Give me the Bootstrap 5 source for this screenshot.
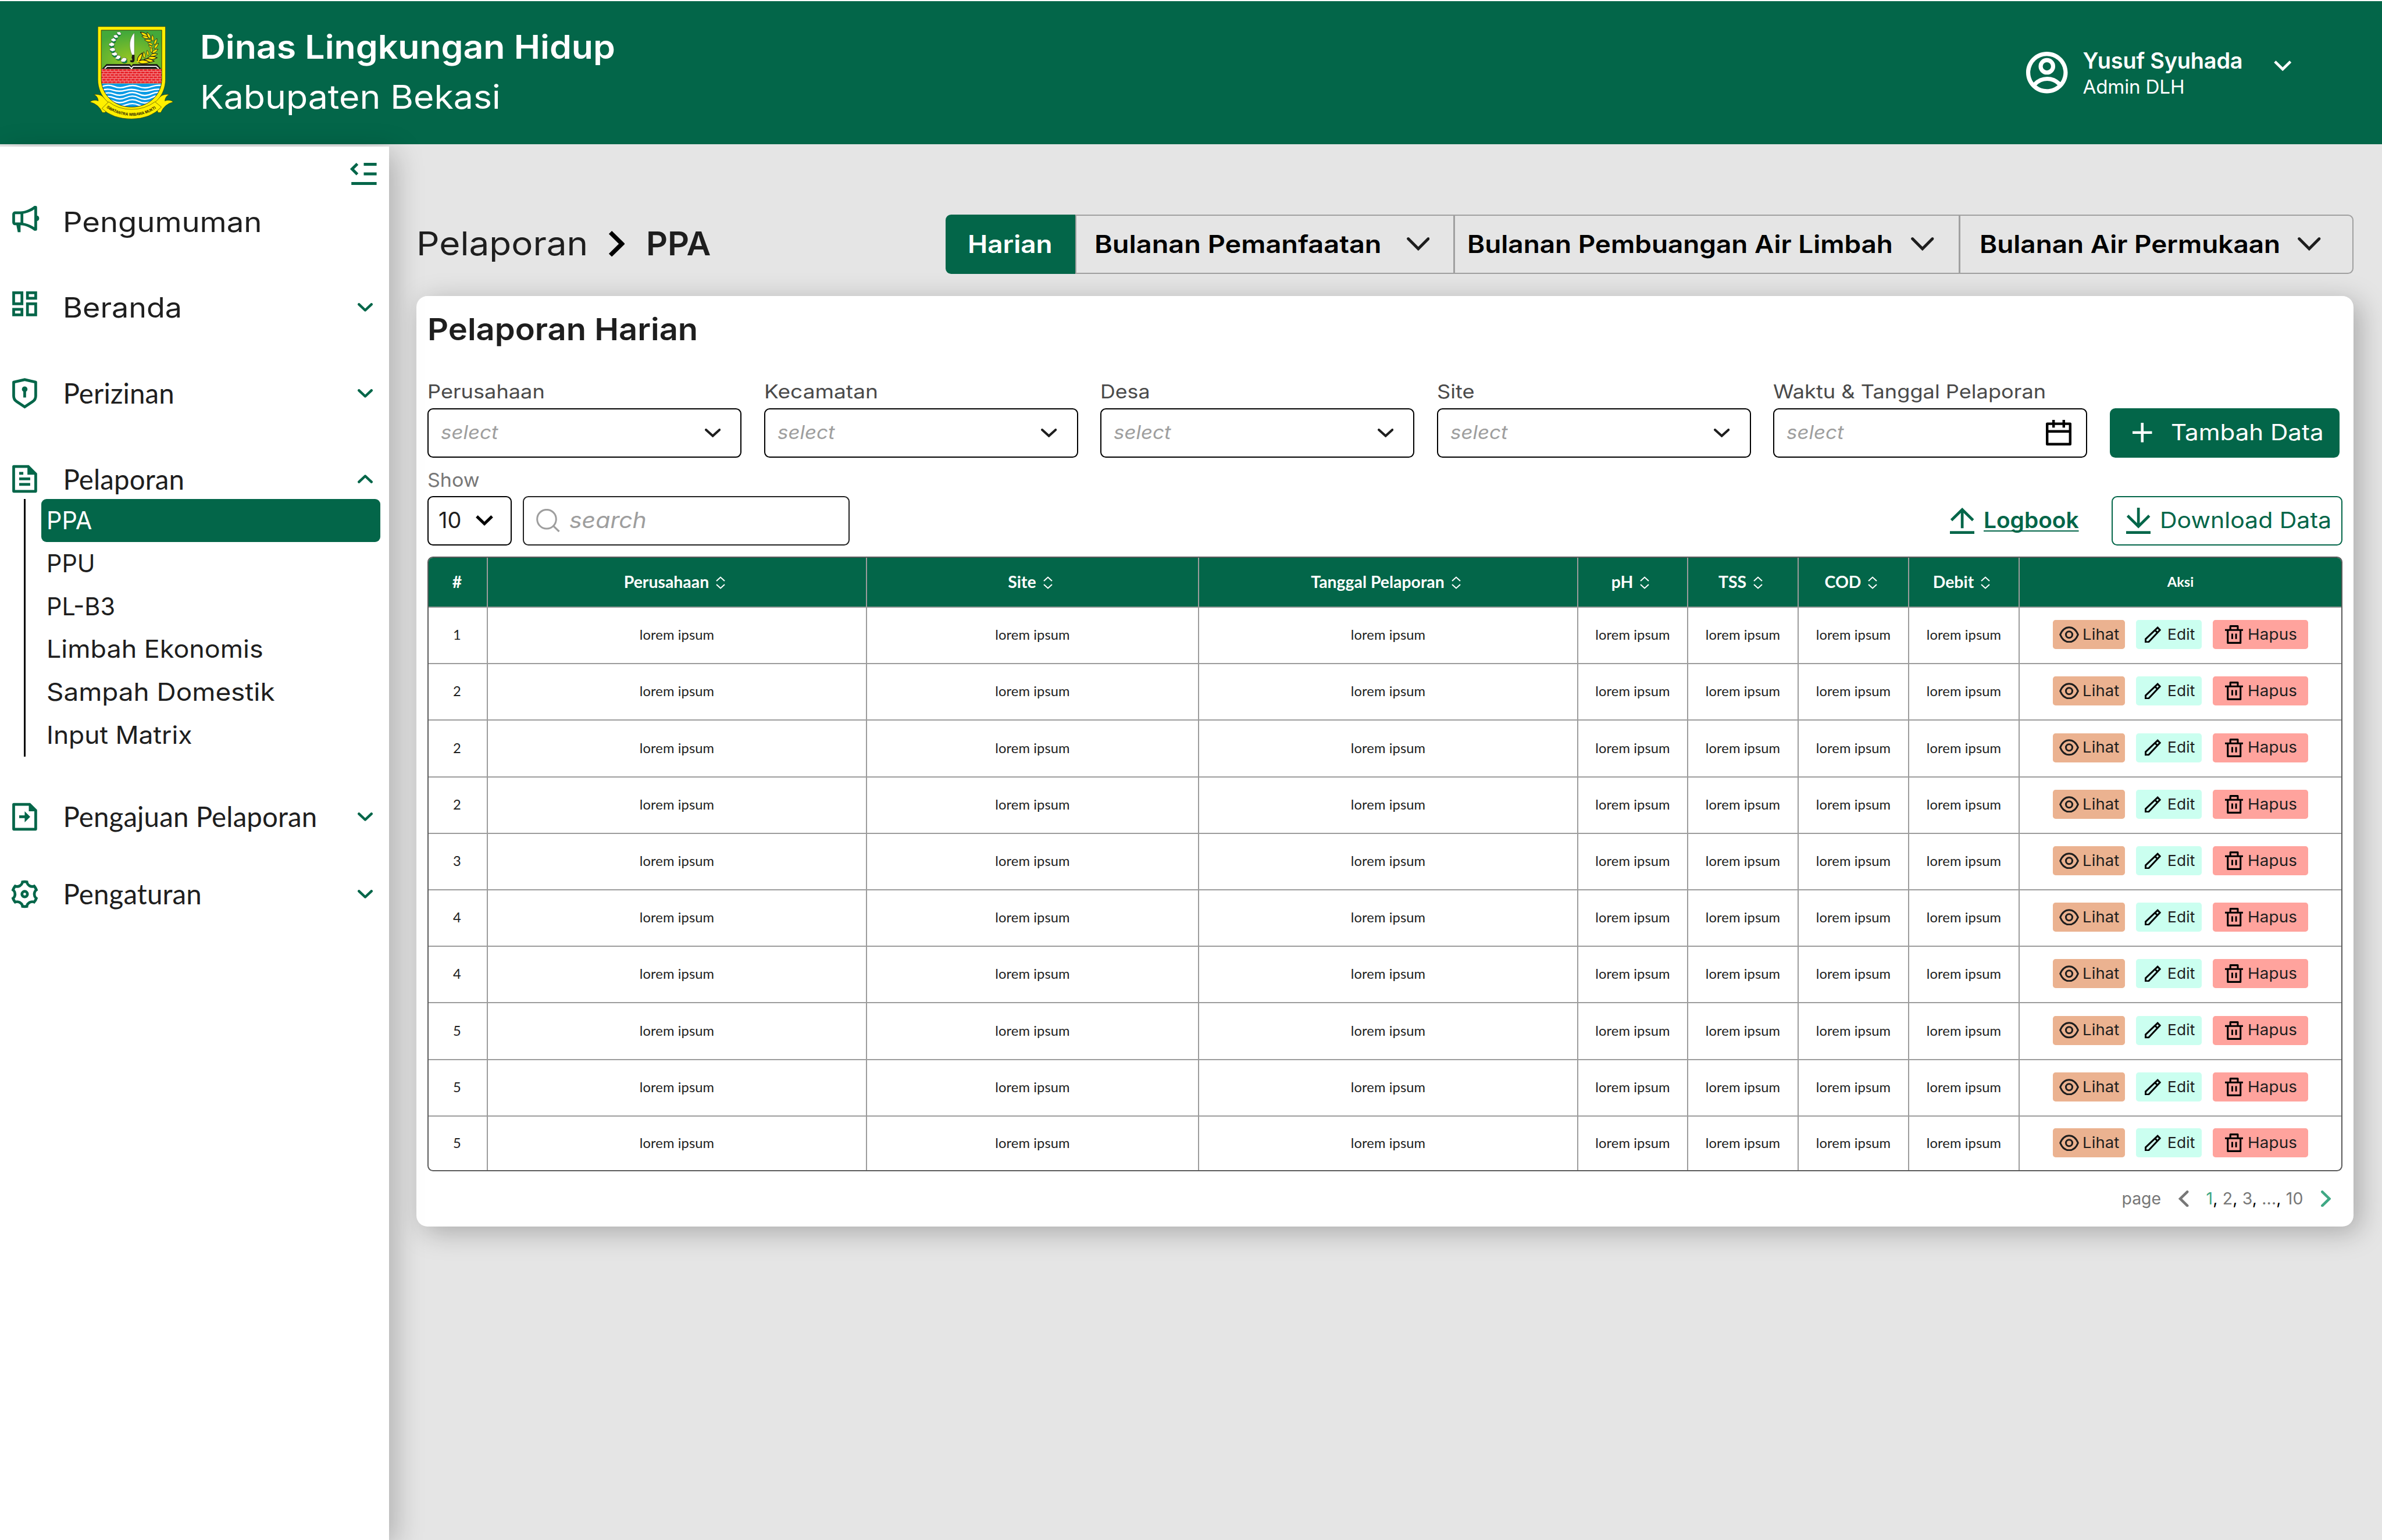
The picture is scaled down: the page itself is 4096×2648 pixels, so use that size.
<!DOCTYPE html>
<html lang="id">
<head>
<meta charset="utf-8">
<meta name="viewport" content="width=device-width, initial-scale=1">
<title>Pelaporan Harian - Dinas Lingkungan Hidup</title>
<link href="https://cdn.jsdelivr.net/npm/bootstrap@5.3.0/dist/css/bootstrap.min.css" rel="stylesheet">
<style>
:root{--dlh:#036649;--ink:#1e1e1e;--line:#9c9c9c}
body{font-family:Inter,"Open Sans",sans-serif;background:#e5e5e5;color:var(--ink);line-height:1;height:2648px;overflow:hidden}
svg{display:block;flex:none}
.lato{font-family:Lato,sans-serif}
.text-dlh{color:var(--dlh)!important}
.bg-dlh{background:var(--dlh)!important}
/* widened lettering: the number is the extra width in thousandths */
.wide{display:inline-block;transform-origin:0 50%;transform:scaleX(var(--w));white-space:nowrap}
.w-20{--w:.97}.w25{--w:1.025}.w40{--w:1.04}.w50{--w:1.052}.w65{--w:1.067}.w75{--w:1.075}.w80{--w:1.082}.w90{--w:1.09}.w98{--w:1.098}.w110{--w:1.11}.w118{--w:1.118}
.w10{--w:1.011}
.t-02{letter-spacing:-.2px}.t0{letter-spacing:.15px}

/* top bar */
.topbar{height:248px;border-top:2px solid #fff;padding:0 156px 0 154px}
.brand-text{font-size:56.9px;line-height:85.2px;margin:0 0 3px 45.5px;white-space:nowrap}
.user-box{width:328px;padding-left:26px;line-height:44.4px;margin-top:3px;box-sizing:content-box;white-space:nowrap}
.user-box b{font-size:37.9px;font-weight:600;display:block}
.user-box span{font-size:33.2px;display:block}

/* side menu */
.side{width:668.5px;height:2396px;margin-top:4px;padding-top:28px;background:#fff;box-shadow:9.5px 9.5px 47px rgba(0,0,0,.25);position:relative;z-index:2}
.side-top{padding-right:21px;margin-bottom:28.5px}
.side-link{height:70px;margin-bottom:77.3px;padding:0 27.5px 0 14.2px;font-size:47.4px;color:var(--ink)}
.side-link .ico{width:94.3px;color:var(--dlh)}
.side-link .raise{margin-bottom:13px}
.side-link .chev{margin-left:auto;color:var(--dlh)}
.side-link.open{margin-bottom:0}
.side-link.after-sub{margin-bottom:63px}
.sub{margin:0 14.5px 68.5px 41.3px;border-left:3px solid #000;padding-left:27px}
.sub a{display:block;height:73.7px;line-height:73.7px;font-size:42.67px;color:var(--ink);text-decoration:none;padding-left:8.5px;border-radius:9px;white-space:nowrap}
.sub a.active{background:var(--dlh);color:#fff}

/* content */
.content{padding:121px 49.5px 0 47px;min-width:0}
.headline{height:102px;margin-bottom:38px}
.crumb{font-size:56.9px;padding-bottom:2px}
.crumb .first{width:330px}
.crumb .last{font-weight:600;margin-left:37px}
.period{height:102px}
.period .btn{border:2.4px solid #a0a0a0;border-radius:9.5px;font-size:42.67px;font-weight:600;color:#000;line-height:1;padding:0;white-space:nowrap;display:flex;align-items:center;justify-content:space-between;flex:none}
.period .b1{width:224px;background:var(--dlh);border-color:var(--dlh);color:#fff;padding-left:36px}
.period .b2{width:652.5px;padding:0 41px 0 31.5px}
.period .b3{width:869.3px;padding:0 42px 0 21px}
.period .b4{width:678px;padding:0 54px 0 33px}

.panel{height:1600px;background:#fff;border:0;border-radius:19px;padding:0 19px 0 19.5px;box-shadow:11px 9.5px 47px rgba(0,0,0,.26)}
.panel h1{font-size:52.15px;font-weight:600;line-height:114px;margin:0 0 29.5px -.5px;color:var(--ink)}
.filters{gap:38.5px}
.filters .item{width:540px}
.filters label,.lbl{font-size:33.2px;line-height:40px;color:#4a4a4a;display:block;margin-bottom:9px;white-space:nowrap}
.lbl{color:#777;margin:18px 0 8px}
.box{height:85px;border:2.4px solid #000;border-radius:9.5px;background:#fff;display:flex;align-items:center;justify-content:space-between;padding:0 34px 0 21px}
.box i{font-size:33.2px;color:#9e9e9e}
.box.date{padding-right:25.5px}
.add{height:85px;width:395px;border-radius:9.5px;font-size:37.9px;color:#fff;padding:0 0 0 39.5px;line-height:1;margin-top:auto;white-space:nowrap}
.add svg{margin-right:32px}
.count{width:145px;font-size:37.9px;padding:0 30.5px 0 17px}
.find{width:561.5px;margin-left:19px;border-color:#222;justify-content:flex-start;padding-left:20.5px}
.find i{font-size:37.9px;margin-left:16px}
.logbook{font-size:37.9px;font-weight:600;margin-right:60px;color:var(--dlh);text-decoration:none}
.logbook span{margin-left:16px;text-decoration:underline;text-decoration-thickness:2.4px;text-underline-offset:4px;text-decoration-skip-ink:none}
.dl{width:396.5px;height:85.5px;border:2.4px solid var(--dlh);border-radius:9.5px;font-size:37.9px;color:var(--dlh);padding:0 0 0 22.5px;line-height:1;white-space:nowrap}
.dl svg{margin-right:16px}

.grid-wrap{border:2.4px solid #5a5a5a;border-radius:9.5px;overflow:hidden;margin-top:18.5px;height:1057px}
.grid{table-layout:fixed;width:3289px;border-collapse:separate;border-spacing:0;margin:0;font-family:Lato,sans-serif;text-align:center;--bs-table-bg:transparent;color:var(--ink)}
.grid th,.grid td{padding:0!important;vertical-align:middle;border:0 solid var(--line)!important;border-width:0 2px 2px 0!important;line-height:1;box-shadow:none!important}
.grid th:last-child,.grid td:last-child{border-right-width:0!important}
.grid tbody tr:last-child td{border-bottom-width:0!important}
.grid th{height:86px;background:var(--dlh)!important;color:#fff;font-size:28.4px;font-weight:700}
.grid th svg{display:inline-block;vertical-align:-2px;margin:0 8px 0 12px}
.grid th.act{font-size:23.7px}
.grid td{height:97px;font-size:23.7px;letter-spacing:.12px;color:var(--ink)}
.grid td:first-child,.grid th:first-child{padding-right:2px!important}
.grid tbody tr:nth-child(5n+3) td{height:98px}
.grid tbody tr:last-child td{height:93px}
.acts{margin-bottom:2px}
.tagbtn{height:50px;border-radius:4.7px;font-family:Inter,sans-serif;font-size:26.07px;display:flex;align-items:center;color:#1e1e1e;white-space:nowrap}
.see{width:123.3px;background:#ebb290;padding-left:11px;margin-right:19px}
.see svg{margin-right:5.5px}
.edit{width:113.7px;background:#cbfff0;padding-left:15px;margin-right:18.6px}
.edit svg{margin-right:11px;color:#000}
.del{width:164px;background:#ffa39d;padding-left:21px}
.del svg{margin-right:7.5px;color:#000}
.pager{font-size:28.4px;color:#777;padding:33px 19.5px 0 0;gap:30px}
.pager em{font-style:normal;color:#000}
.text-now{color:#3fa884}
</style>
<script src="https://cdn.jsdelivr.net/npm/bootstrap@5.3.0/dist/js/bootstrap.bundle.min.js"></script>
</head>
<body>
<svg width="0" height="0" style="position:absolute">
  <defs>
    <symbol id="chev" viewBox="0 0 26 15"><path d="M2.3 2.3 13 12.5 23.7 2.3" fill="none" stroke="currentColor" stroke-width="4.4" stroke-linecap="round" stroke-linejoin="round"/></symbol>
    <symbol id="chev-lg" viewBox="0 0 39.6 23.4"><path d="M2.6 2.6 19.8 19.8 37 2.6" fill="none" stroke="currentColor" stroke-width="4.9" stroke-linecap="round"/></symbol>
    <symbol id="chev-md" viewBox="0 0 27.3 15"><path d="M2 2 13.65 12.6 25.3 2" fill="none" stroke="currentColor" stroke-width="4" stroke-linecap="round"/></symbol>
    <symbol id="sort" viewBox="0 0 16 22"><path d="M1 8 8 1.6 15 8M1 14 8 20.4 15 14" fill="none" stroke="currentColor" stroke-width="2.1"/></symbol>
    <symbol id="eye" viewBox="0 0 34 28.6"><path d="M1.7 14.3C5 6 10.500 1.7 17 1.700S29 6 32.300 14.300C29 22.600 23.500 26.900 17 26.900S5 22.600 1.700 14.300z" fill="none" stroke="currentColor" stroke-width="3.100"/><circle cx="17" cy="14.300" r="5.500" fill="none" stroke="currentColor" stroke-width="3.100"/></symbol>
    <symbol id="pen" viewBox="0 0 28.500 28.600"><path d="M1.500 21.900 22.200 2.100 26.200 6.200 6.600 27H1.500zM17.600 6.500 22 11" fill="none" stroke="currentColor" stroke-width="3"/></symbol>
    <symbol id="bin" viewBox="0 0 31.500 32"><path d="M0 8.200H31.500M9.200 8V1.600H22V8M4.800 8.200V30.400H26.700V8.200" fill="none" stroke="currentColor" stroke-width="3.100" stroke-linejoin="round"/><path d="M12.500 14.600V23.700M19.100 14.600V23.700" stroke="currentColor" stroke-width="3"/></symbol>
    <path id="leaf" d="M0 0C-15-12-15-38 0-62C13-38 13-12 0 0z"/>
    <g id="boll"><path d="M-24 4Q-14 32 14 26L24 2z" fill="#009245" stroke="#1a1a1a" stroke-width="2"/><path d="M-26-4Q-20-14-10-14Q-2-24 8-16Q24-12 22 4Q16 12 6 12Q-4 20-12 10Q-26 8-26-4z" fill="#fff" stroke="#333" stroke-width="2"/></g>
    <radialGradient id="field" cx="50%" cy="80%" r="75%"><stop offset="0" stop-color="#9cc821"/><stop offset="1" stop-color="#43a93a"/></radialGradient>
    <pattern id="brick" x="162" y="450" width="36" height="42" patternUnits="userSpaceOnUse"><rect width="36" height="42" fill="#f9c9c6"/><rect x="1" y="1.500" width="6" height="17" fill="#e71d25"/><rect x="10" y="1.500" width="26" height="17" fill="#e71d25"/><rect x="0" y="22.500" width="20" height="17" fill="#e71d25"/><rect x="23" y="22.500" width="13" height="17" fill="#e71d25"/></pattern>
    <clipPath id="shieldClip"><path d="M162 112H689V540C689 660 590 782 426 782S162 660 162 540z"/></clipPath>
    <path id="motto" d="M206 786Q300 856 426 858T660 780"/>
  </defs>
</svg>

<header class="topbar bg-dlh text-white d-flex align-items-center">
  <svg width="144.500" height="160" viewBox="60 78 732 809" role="img" aria-label="Lambang Kabupaten Bekasi">
    <g stroke="#2b2b00" stroke-width="3" stroke-linejoin="round">
      <path d="M62 737Q95 712 136 728Q134 690 98 672Q150 668 174 690L226 736L196 830L172 830Q140 756 62 737z" fill="#fff000"/>
      <path d="M790 737Q757 712 716 728Q718 690 754 672Q702 668 678 690L626 736L656 830L680 830Q712 756 790 737z" fill="#fff000"/>
      <path d="M132 81H721V540C721 690 610 806 426 806S132 690 132 540z" fill="#fff000"/>
    </g>
    <g clip-path="url(#shieldClip)">
      <rect x="162" y="112" width="527" height="340" fill="url(#field)"/>
      <rect x="162" y="449" width="527" height="128" fill="url(#brick)"/>
      <rect x="162" y="577" width="527" height="210" fill="#0a9be4"/>
      <g fill="none" stroke="#fff" stroke-width="12">
        <path d="M160 606Q220 580 272 602T380 604T488 604T600 604T700 596"/>
        <path d="M160 640Q210 616 262 634T370 636T480 636T590 636T700 630"/>
        <path d="M160 672Q220 646 272 668T380 666T488 668T596 668T700 660"/>
        <path d="M160 706Q220 676 272 700T380 698T488 700T596 700T700 692"/>
        <path d="M160 738Q220 708 272 732T380 730T488 732T596 732T700 724"/>
        <path d="M160 766Q220 744 272 764T380 762T488 764T596 764T700 760"/>
      </g>
    </g>
    <path d="M162 112H689V540C689 660 590 782 426 782S162 660 162 540z" fill="none" stroke="#111" stroke-width="4"/>
    <path d="M168 449 207 408H412L426 426 436 408H648L684 449z" fill="#1a1718"/>
    <path d="M192 447 212 427H406L426 445 440 427H640L662 447" fill="none" stroke="#fff" stroke-width="9"/>
    <path d="M450 136C405 180 400 260 430 328H450z" fill="#fff" stroke="#444" stroke-width="2"/>
    <path d="M432 327H452V372Q450 394 430 393Q412 392 413 376Q424 372 430 376Q436 366 426 352z" fill="#1a1718"/>
    <use href="#boll" transform="translate(360 372) rotate(-25) scale(1.100)"/>
    <use href="#boll" transform="translate(309 350) rotate(-18)"/>
    <use href="#boll" transform="translate(279 321)"/>
    <use href="#boll" transform="translate(261 282)"/>
    <use href="#boll" transform="translate(254 238)"/>
    <use href="#boll" transform="translate(270 198) scale(.9)"/>
    <use href="#boll" transform="translate(290 168) rotate(10) scale(.850)"/>
    <use href="#boll" transform="translate(317 142) rotate(20) scale(.800)"/>
    <g fill="#ffe600" stroke="#1a1718" stroke-width="4">
      <use href="#leaf" transform="translate(565 165) rotate(-60) scale(1.150)"/>
      <use href="#leaf" transform="translate(590 185) rotate(-28)"/>
      <use href="#leaf" transform="translate(575 180) rotate(-76)"/>
      <use href="#leaf" transform="translate(612 208) rotate(-4) scale(.9)"/>
      <use href="#leaf" transform="translate(600 207) rotate(-80)"/>
      <use href="#leaf" transform="translate(624 238) rotate(23) scale(.95)"/>
      <use href="#leaf" transform="translate(612 240) rotate(-68) scale(.800)"/>
      <use href="#leaf" transform="translate(624 272) rotate(38) scale(.950)"/>
      <use href="#leaf" transform="translate(610 272) rotate(-50) scale(.750)"/>
      <use href="#leaf" transform="translate(605 312) rotate(56)"/>
      <use href="#leaf" transform="translate(600 308) rotate(-6) scale(.800)"/>
      <use href="#leaf" transform="translate(590 335) rotate(76) scale(1.050)"/>
      <use href="#leaf" transform="translate(572 335) rotate(-12) scale(.800)"/>
      <use href="#leaf" transform="translate(565 358) rotate(86) scale(1.350)"/>
      <use href="#leaf" transform="translate(540 355) rotate(-8) scale(.900)"/>
      <use href="#leaf" transform="translate(530 374) rotate(95) scale(1.500)"/>
      <use href="#leaf" transform="translate(480 388) rotate(27) scale(1.400)"/>
      <use href="#leaf" transform="translate(484 388) rotate(92) scale(1.600)"/>
    </g>
    <path d="M468 382 484 396 494 378z" fill="#ffe600"/>
    <path d="M226 736Q310 802 426 802T630 736L686 782Q590 885 426 885T168 794z" fill="#fff000" stroke="#2b2b00" stroke-width="3"/>
    <text font-family="Liberation Sans" font-weight="700" font-size="36" fill="#2b2300"><textPath href="#motto" textLength="462" lengthAdjust="spacingAndGlyphs">SWATANTRA WIBAWA MUKTI</textPath></text>
  </svg>
  <div class="brand-text"><div><span class="wide w65 fw-semibold">Dinas Lingkungan Hidup</span></div><div><span class="wide w65">Kabupaten Bekasi</span></div></div>
  <div class="ms-auto d-flex align-items-center">
    <svg width="71.500" height="71.500" viewBox="2 2 20 20" fill="currentColor"><path d="M12 22C6.477 22 2 17.523 2 12S6.477 2 12 2s10 4.477 10 10-4.477 10-10 10zm-4.987-3.744A7.966 7.966 0 0 0 12 20c1.970 0 3.773-.712 5.167-1.892A6.979 6.979 0 0 0 12.160 16a6.981 6.981 0 0 0-5.147 2.256zM5.616 16.820A8.975 8.975 0 0 1 12.160 14a8.972 8.972 0 0 1 6.362 2.634 8 8 0 1 0-12.906.187zM12 13a4 4 0 1 1 0-8 4 4 0 0 1 0 8zm0-2a2 2 0 1 0 0-4 2 2 0 0 0 0 4z"/></svg>
    <div class="user-box"><b class="t-02">Yusuf Syuhada</b><span class="t-02">Admin DLH</span></div>
    <svg width="30.500" height="18.500" viewBox="0 0 30.500 18.500" class="mb-4"><path d="M1.900 1.900 15.250 15 28.600 1.900" fill="none" stroke="currentColor" stroke-width="4.600"/></svg>
  </div>
</header>

<div class="d-flex">
  <nav class="side flex-shrink-0">
    <div class="side-top d-flex justify-content-end text-dlh">
      <svg width="45.600" height="38" viewBox="0 0 45.600 38"><path d="M12.500 1.700 3.400 10.700 12.500 19.700M23.500 2.500H45.600M23.500 19H45.600M2.200 35.500H45.600" fill="none" stroke="currentColor" stroke-width="4.900"/></svg>
    </div>
    <a class="side-link d-flex align-items-center text-decoration-none" href="#">
      <span class="ico raise"><svg width="56.900" height="56.900" viewBox="0 0 24 24" fill="currentColor" fill-rule="evenodd"><path d="M21 10.060V4a1 1 0 0 0-1-1h-1c-2.500 2-6.500 4-10 4H5a2 2 0 0 0-2 2v6a2 2 0 0 0 2 2h1l1 5h2v-5c3.500 0 7.500 2 10 4h1a1 1 0 0 0 1-1v-6.060a2 2 0 0 0 0-3.880zM5 9h4v6H5zM11 8.700c3-.5 6-1.800 8-3.200v13c-2-1.400-5-2.700-8-3.200z"/></svg></span>
      <span class="wide w110">Pengumuman</span>
    </a>
    <a class="side-link d-flex align-items-center text-decoration-none" href="#">
      <span class="ico raise"><svg width="56.900" height="56.900" viewBox="0 0 24 24" fill="currentColor"><path d="M13 21V11h8v10h-8zM3 13V3h8v10H3zm6-2V5H5v6h4zM3 21v-6h8v6H3zm2-2h4v-2H5v2zm10 0h4v-6h-4v6zM13 3h8v6h-8V3zm2 2v2h4V5h-4z"/></svg></span>
      <span class="wide w98">Beranda</span><svg class="chev" width="26" height="15"><use href="#chev"/></svg>
    </a>
    <a class="side-link lato d-flex align-items-center text-decoration-none" href="#">
      <span class="ico"><svg width="56.900" height="56.900" viewBox="0 0 24 24" fill="currentColor"><path d="M12 1l8.217 1.826a1 1 0 0 1 .783.976v9.987a6 6 0 0 1-2.672 4.992L12 23l-6.328-4.219A6 6 0 0 1 3 13.790V3.802a1 1 0 0 1 .783-.976L12 1zm0 2.049L5 4.604v9.185a4 4 0 0 0 1.781 3.328L12 20.597l5.219-3.480A4 4 0 0 0 19 13.790V4.604L12 3.050zM12 7a2 2 0 0 1 1.001 3.732L13 15h-2v-4.268A2 2 0 0 1 12 7z"/></svg></span>
      <span class="t0">Perizinan</span><svg class="chev" width="26" height="15"><use href="#chev"/></svg>
    </a>
    <a class="side-link open lato d-flex align-items-center text-decoration-none" href="#">
      <span class="ico"><svg width="56.900" height="56.900" viewBox="0 0 24 24" fill="currentColor"><path d="M21 8v12.993A1 1 0 0 1 20.007 22H3.993A.993.993 0 0 1 3 21.008V2.992C3 2.455 3.449 2 4.002 2h10.995L21 8zm-2 1h-5V4H5v16h14V9zM8 7h3v2H8V7zm0 4h8v2H8v-2zm0 4h8v2H8v-2z"/></svg></span>
      <span class="t0">Pelaporan</span><svg class="chev" width="26" height="15"><use href="#chev" transform="rotate(180 13 7.500)"/></svg>
    </a>
    <div class="sub">
      <a href="#" class="active"><span class="wide w-20">PPA</span></a>
      <a href="#"><span class="wide w-20">PPU</span></a>
      <a href="#"><span class="wide w-20">PL-B3</span></a>
      <a href="#"><span class="wide w50">Limbah Ekonomis</span></a>
      <a href="#"><span class="wide w75">Sampah Domestik</span></a>
      <a href="#"><span class="wide w40">Input Matrix</span></a>
    </div>
    <a class="side-link after-sub lato d-flex align-items-center text-decoration-none" href="#">
      <span class="ico"><svg width="56.900" height="56.900" viewBox="0 0 24 24" fill="currentColor"><path d="M15 4H5v16h14V8h-4V4zM3 2.992C3 2.444 3.447 2 3.999 2H16l5 5v13.993A1 1 0 0 1 20.007 22H3.993A1 1 0 0 1 3 21.008V2.992zM12 11V8l4 4-4 4v-3H8v-2h4z"/></svg></span>
      <span class="t0">Pengajuan Pelaporan</span><svg class="chev" width="26" height="15"><use href="#chev"/></svg>
    </a>
    <a class="side-link lato d-flex align-items-center text-decoration-none" href="#">
      <span class="ico"><svg width="56.900" height="56.900" viewBox="0 0 24 24" fill="currentColor"><path d="M3.340 17a10.018 10.018 0 0 1-.978-2.326 3 3 0 0 0 .002-5.347A9.990 9.990 0 0 1 4.865 4.990a3 3 0 0 0 4.631-2.674 9.990 9.990 0 0 1 5.007.002 3 3 0 0 0 4.632 2.672c.579.590 1.093 1.261 1.525 2.010.433.749.757 1.530.978 2.326a3 3 0 0 0-.002 5.347 9.990 9.990 0 0 1-2.501 4.337 3 3 0 0 0-4.631 2.674 9.990 9.990 0 0 1-5.007-.002 3 3 0 0 0-4.632-2.672A10.018 10.018 0 0 1 3.340 17zm5.660.196a4.993 4.993 0 0 1 2.250 2.770c.499.047 1 .048 1.499.001A4.993 4.993 0 0 1 15 17.197a4.993 4.993 0 0 1 3.525-.565c.290-.408.540-.843.748-1.298A4.993 4.993 0 0 1 18 12c0-1.260.470-2.437 1.273-3.334a8.126 8.126 0 0 0-.750-1.298A4.993 4.993 0 0 1 15 6.804a4.993 4.993 0 0 1-2.250-2.770c-.499-.047-1-.048-1.499-.001A4.993 4.993 0 0 1 9 6.803a4.993 4.993 0 0 1-3.525.565 7.990 7.990 0 0 0-.748 1.298A4.993 4.993 0 0 1 6 12c0 1.260-.470 2.437-1.273 3.334a8.126 8.126 0 0 0 .750 1.298A4.993 4.993 0 0 1 9 17.196zM12 15a3 3 0 1 1 0-6 3 3 0 0 1 0 6zm0-2a1 1 0 1 0 0-2 1 1 0 0 0 0 2z"/></svg></span>
      <span class="t0">Pengaturan</span><svg class="chev" width="26" height="15"><use href="#chev"/></svg>
    </a>
  </nav>

  <main class="content flex-grow-1">
    <div class="headline d-flex align-items-center justify-content-between">
      <div class="crumb d-flex align-items-center">
        <div class="first"><span class="wide w90">Pelaporan</span></div>
        <svg width="28.500" height="44.500" viewBox="0 0 28.500 44.500"><path d="M3.500 2.700 23.500 22.250 3.500 41.800" fill="none" stroke="#000" stroke-width="7.400"/></svg>
        <span class="last wide w10">PPA</span>
      </div>
      <div class="period btn-group">
        <button class="btn b1" type="button"><span class="wide w75">Harian</span></button>
        <button class="btn b2" type="button"><span class="wide w98">Bulanan Pemanfaatan</span><svg width="39.600" height="23.400" color="#1e1e1e"><use href="#chev-lg"/></svg></button>
        <button class="btn b3" type="button"><span class="wide w75">Bulanan Pembuangan Air Limbah</span><svg width="39.600" height="23.400" color="#1e1e1e"><use href="#chev-lg"/></svg></button>
        <button class="btn b4" type="button"><span class="wide w75">Bulanan Air Permukaan</span><svg width="39.600" height="23.400" color="#1e1e1e"><use href="#chev-lg"/></svg></button>
      </div>
    </div>

    <section class="panel card">
      <h1><span class="wide w75">Pelaporan Harian</span></h1>
      <div class="filters d-flex">
        <div class="item"><label><span class="wide w90">Perusahaan</span></label><div class="box"><i class="wide w50">select</i><svg width="27.300" height="15"><use href="#chev-md"/></svg></div></div>
        <div class="item"><label><span class="wide w118">Kecamatan</span></label><div class="box"><i class="wide w50">select</i><svg width="27.300" height="15"><use href="#chev-md"/></svg></div></div>
        <div class="item"><label><span class="wide w75">Desa</span></label><div class="box"><i class="wide w50">select</i><svg width="27.300" height="15"><use href="#chev-md"/></svg></div></div>
        <div class="item"><label><span class="wide w90">Site</span></label><div class="box"><i class="wide w50">select</i><svg width="27.300" height="15"><use href="#chev-md"/></svg></div></div>
        <div class="item"><label><span class="wide w90">Waktu &amp; Tanggal Pelaporan</span></label><div class="box date"><i class="wide w50">select</i><svg width="44" height="44" viewBox="2 1 20 20" fill="#000"><path d="M17 3h4a1 1 0 0 1 1 1v16a1 1 0 0 1-1 1H3a1 1 0 0 1-1-1V4a1 1 0 0 1 1-1h4V1h2v2h6V1h2v2zm-2 2H9v2H7V5H4v4h16V5h-3v2h-2V5zm5 6H4v8h16v-8z"/></svg></div></div>
        <button class="add btn bg-dlh border-0 d-flex align-items-center" type="button"><svg width="33.500" height="33.500" viewBox="0 0 33.500 33.500"><path d="M16.750 0V33.500M0 16.750H33.500" stroke="#fff" stroke-width="4.600"/></svg><span class="wide w110">Tambah Data</span></button>
      </div>
      <div class="lbl"><span class="wide w25">Show</span></div>
      <div class="d-flex align-items-center">
        <div class="box count">10<svg width="30" height="18" viewBox="0 0 30 18"><path d="M1.900 1.900 15 14.500 28.100 1.900" fill="none" stroke="#000" stroke-width="5"/></svg></div>
        <div class="box find"><svg width="41" height="40" viewBox="0 0 41 40"><circle cx="18" cy="17.700" r="16.300" fill="none" stroke="#9e9e9e" stroke-width="3"/><path d="M29.500 29.300 39.500 39" stroke="#9e9e9e" stroke-width="3.200"/></svg><i class="wide w80">search</i></div>
        <a class="logbook d-flex align-items-center ms-auto" href="#"><svg width="42.300" height="45" viewBox="0 0 42.300 45"><path d="M2.500 21.500 21.150 3.200 39.800 21.500M21.150 4V35.300" fill="none" stroke="currentColor" stroke-width="4.700"/><path d="M0 42.600H42.300" stroke="currentColor" stroke-width="4.700"/></svg><span class="wide w25">Logbook</span></a>
        <button class="dl btn bg-white d-flex align-items-center" type="button"><svg width="42.300" height="45" viewBox="0 0 42.300 45"><path d="M2.500 13.800 21.150 32.100 39.800 13.800M21.150 0V32" fill="none" stroke="currentColor" stroke-width="4.700"/><path d="M0 42.600H42.300" stroke="currentColor" stroke-width="4.700"/></svg><span class="wide w80">Download Data</span></button>
      </div>

      <div class="grid-wrap">
        <table class="grid table">
          <colgroup><col width="102"><col width="652"><col width="571"><col width="652"><col width="189"><col width="190"><col width="190"><col width="190"><col></colgroup>
          <thead><tr>
            <th>#</th>
            <th>Perusahaan<svg width="16" height="22"><use href="#sort"/></svg></th>
            <th>Site<svg width="16" height="22"><use href="#sort"/></svg></th>
            <th>Tanggal Pelaporan<svg width="16" height="22"><use href="#sort"/></svg></th>
            <th>pH<svg width="16" height="22"><use href="#sort"/></svg></th>
            <th>TSS<svg width="16" height="22"><use href="#sort"/></svg></th>
            <th>COD<svg width="16" height="22"><use href="#sort"/></svg></th>
            <th>Debit<svg width="16" height="22"><use href="#sort"/></svg></th>
            <th class="act">Aksi</th>
          </tr></thead>
          <tbody id="rows"></tbody>
        </table>
      </div>
      <div class="pager d-flex align-items-center justify-content-end">
        <span>page</span>
        <svg width="17.500" height="28.400" viewBox="0 0 17.500 28.400"><path d="M15.200 2.300 3 14.200 15.200 26.100" fill="none" stroke="#777" stroke-width="4.500" stroke-linecap="round"/></svg>
        <span class="t0"><span class="text-now">1</span><em>,</em> 2<em>,</em> 3<em>,</em> ...<em>,</em> 10</span>
        <svg width="17.500" height="28.400" viewBox="0 0 17.500 28.400"><path d="M2.300 2.300 14.500 14.200 2.300 26.100" fill="none" stroke="#3fa884" stroke-width="4.500" stroke-linecap="round"/></svg>
      </div>
    </section>
  </main>
</div>

<script>
  const numbers = [1, 2, 2, 2, 3, 4, 4, 5, 5, 5];
  document.getElementById('rows').innerHTML = numbers.map(n => `
    <tr><td>${n}</td>${'<td>lorem ipsum</td>'.repeat(7)}
      <td><div class="acts d-flex justify-content-center">
        <span class="tagbtn see"><svg width="34" height="28.600"><use href="#eye"/></svg><span class="wide w50">Lihat</span></span>
        <span class="tagbtn edit"><svg width="28.500" height="28.600"><use href="#pen"/></svg><span class="wide w10">Edit</span></span>
        <span class="tagbtn del"><svg width="31.500" height="32"><use href="#bin"/></svg><span class="wide w65">Hapus</span></span>
      </div></td></tr>`).join('');
</script>
</body>
</html>
